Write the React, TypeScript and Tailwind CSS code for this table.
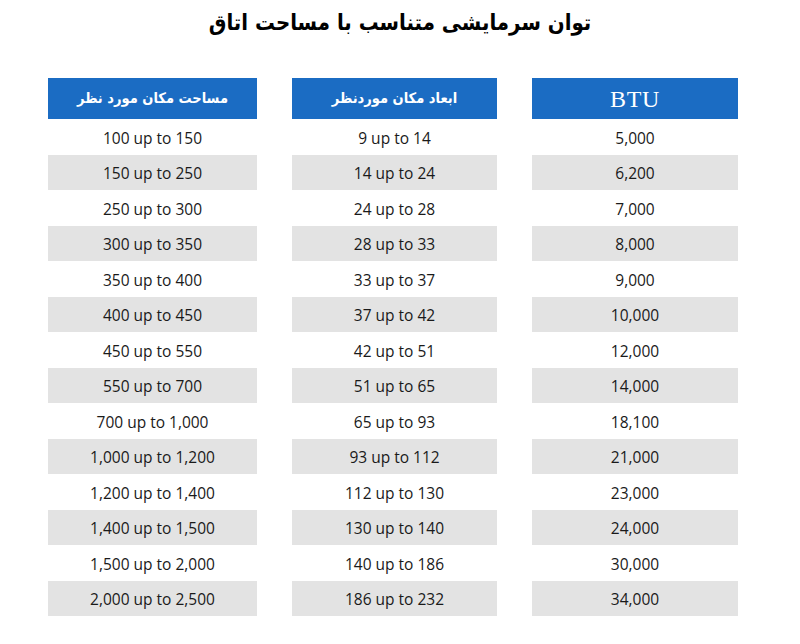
const rows = [
  ['100 up to 150', '9 up to 14', '5,000'],
  ['150 up to 250', '14 up to 24', '6,200'],
  ['250 up to 300', '24 up to 28', '7,000'],
  ['300 up to 350', '28 up to 33', '8,000'],
  ['350 up to 400', '33 up to 37', '9,000'],
  ['400 up to 450', '37 up to 42', '10,000'],
  ['450 up to 550', '42 up to 51', '12,000'],
  ['550 up to 700', '51 up to 65', '14,000'],
  ['700 up to 1,000', '65 up to 93', '18,100'],
  ['1,000 up to 1,200', '93 up to 112', '21,000'],
  ['1,200 up to 1,400', '112 up to 130', '23,000'],
  ['1,400 up to 1,500', '130 up to 140', '24,000'],
  ['1,500 up to 2,000', '140 up to 186', '30,000'],
  ['2,000 up to 2,500', '186 up to 232', '34,000'],
]

const faFont = "font-['DejaVu_Sans_Condensed','DejaVu_Sans',sans-serif]"

function Column({ header, values, serifHeader }: { header: string; values: string[]; serifHeader?: boolean }) {
  return (
    <div className="flex flex-col">
      <div className="flex h-[41px] items-center justify-center bg-[#1b6cc3] text-white">
        {serifHeader ? (
          <span className="font-['Liberation_Serif',serif] text-[24px] tracking-wide">{header}</span>
        ) : (
          <span dir="rtl" className={`${faFont} text-[14.5px] font-bold`}>
            {header}
          </span>
        )}
      </div>
      {values.map((v, i) => (
        <div
          key={i}
          className={`flex h-[35.5px] items-center justify-center pt-[3px] text-[15.5px] text-[#1a1a1a] font-['Open_Sans',sans-serif] ${
            i % 2 === 1 ? 'bg-[#e3e3e3]' : 'bg-white'
          }`}
        >
          {v}
        </div>
      ))}
    </div>
  )
}

export default function App() {
  return (
    <div className="h-[644px] w-[800px] bg-white">
      <h1 dir="rtl" className={`${faFont} pt-[6px] text-center text-[22px] font-bold leading-[34px] text-black`}>
        توان سرمایشی متناسب با مساحت اتاق
      </h1>
      <div className="mt-[38px] grid grid-cols-[209px_205px_206px] gap-x-[35px] pl-[48px]">
        <Column header="مساحت مکان مورد نظر" values={rows.map((r) => r[0])} />
        <Column header="ابعاد مکان موردنظر" values={rows.map((r) => r[1])} />
        <Column header="BTU" values={rows.map((r) => r[2])} serifHeader />
      </div>
    </div>
  )
}
